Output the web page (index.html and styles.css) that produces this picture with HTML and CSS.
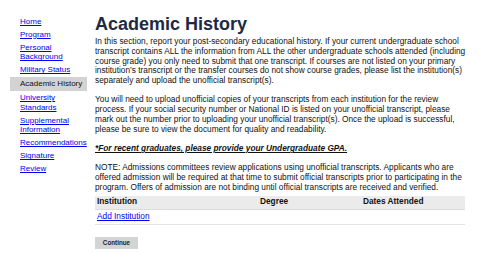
FILE: index.html
```html
<!DOCTYPE html>
<html>
<head>
<meta charset="utf-8">
<link rel="stylesheet" href="styles.css">
</head>
<body>
<div class="page">
  <nav class="nav">
    <a class="nav-item" href="#">Home</a>
    <a class="nav-item" href="#">Program</a>
    <a class="nav-item" href="#">Personal Background</a>
    <a class="nav-item" href="#">Military Status</a>
    <span class="nav-item active">Academic History</span>
    <a class="nav-item" href="#">University Standards</a>
    <a class="nav-item" href="#">Supplemental Information</a>
    <a class="nav-item" href="#">Recommendations</a>
    <a class="nav-item" href="#">Signature</a>
    <a class="nav-item" href="#">Review</a>
  </nav>
  <main class="main">
    <h1 class="title">Academic History</h1>
    <p class="para">In this section, report your post-secondary educational history. If your current undergraduate school transcript contains ALL the information from ALL the other undergraduate schools attended (including course grade) you only need to submit that one transcript. If courses are not listed on your primary institution’s transcript or the transfer courses do not show course grades, please list the institution(s) separately and upload the unofficial transcript(s).</p>
    <p class="para">You will need to upload unofficial copies of your transcripts from each institution for the review process. If your social security number or National ID is listed on your unofficial transcript, please mark out the number prior to uploading your unofficial transcript(s). Once the upload is successful, please be sure to view the document for quality and readability.</p>
    <p class="para gpa">*For recent graduates, please provide your Undergraduate GPA.</p>
    <p class="para note">NOTE: Admissions committees review applications using unofficial transcripts. Applicants who are offered admission will be required at that time to submit official transcripts prior to participating in the program. Offers of admission are not binding until official transcripts are received and verified.</p>
    <div class="table">
      <div class="row head">
        <div class="cell c1">Institution</div>
        <div class="cell c2">Degree</div>
        <div class="cell c3">Dates Attended</div>
      </div>
      <div class="row body-row">
        <div class="cell c1"><a href="#">Add Institution</a></div>
        <div class="cell c2"></div>
        <div class="cell c3"></div>
      </div>
    </div>
    <button class="btn" type="button">Continue</button>
  </main>
</div>
</body>
</html>
```

FILE: styles.css
```css
html, body {
  margin: 0;
  padding: 0;
  background: #fff;
}
body {
  font-family: "Liberation Sans", Arial, sans-serif;
  font-size: 8px;
  line-height: 9.7px;
  color: #111;
}
.page {
  display: flex;
  align-items: flex-start;
  padding: 13px 0 0 10px;
}
.nav {
  width: 77px;
  flex: none;
  display: flex;
  flex-direction: column;
  gap: 3.2px;
  padding-top: 4px;
}
.nav-item {
  display: block;
  padding: 0 4px 0 10px;
  color: #0000ee;
  text-decoration: underline;
}
.nav-item.active {
  background: #d3d3d3;
  color: #111;
  text-decoration: none;
  padding-top: 2px;
  padding-bottom: 2px;
  margin: -1px 0;
}
.main {
  margin-left: 8px;
  width: 371px;
  font-size: 8.3px;
  line-height: 9.8px;
}
.title {
  margin: 0 0 2px 0;
  font-size: 18px;
  line-height: 22px;
  font-weight: bold;
  color: #1e2a45;
}
.para {
  margin: 0 0 9.5px 0;
}
.para.note {
  margin-bottom: 3px;
}
.gpa {
  font-weight: bold;
  font-style: italic;
  text-decoration: underline;
}
.row {
  display: grid;
  grid-template-columns: 165px 103px 1fr;
  width: 370px;
}
.head {
  background: #ebebeb;
  font-weight: bold;
  height: 13px;
  align-items: center;
  border-bottom: 1px solid #dcdcdc;
}
.body-row {
  height: 14px;
  align-items: center;
  border-bottom: 1px solid #e4e4e4;
}
.cell.c1 {
  padding-left: 2px;
}
.body-row a {
  color: #0000ee;
  text-decoration: underline;
}
.btn {
  display: block;
  margin-top: 12px;
  width: 43px;
  height: 12px;
  padding: 0;
  border: none;
  background: #d4d4d4;
  font-family: "Liberation Sans", Arial, sans-serif;
  font-size: 6.3px;
  font-weight: bold;
  color: #222;
}
```
